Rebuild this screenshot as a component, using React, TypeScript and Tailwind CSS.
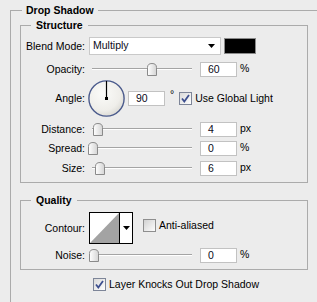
import React from "react";

const FONT = { fontFamily: '"Liberation Sans", Arial, sans-serif' };

function Thumb() {
    return (
        <svg width="10" height="13" viewBox="0 0 10 13" className="block">
            <defs>
                <linearGradient id="tg" x1="0" y1="0" x2="1" y2="0">
                    <stop offset="0" stopColor="#ffffff" />
                    <stop offset="1" stopColor="#d4d4d4" />
                </linearGradient>
            </defs>
            <path d="M0.5 4.5 Q0.5 0.5 5 0.5 Q9.5 0.5 9.5 4.5 V12.5 H0.5 Z" fill="url(#tg)" stroke="#8a8a8a" />
        </svg>
    );
}

function Slider({ left }: { left: number }) {
    return (
        <div className="relative w-[108px] h-[15px] shrink-0">
            <div className="absolute left-[4px] right-[4px] top-[6px] h-[2px] border-t border-[#a4a4a4] border-b border-b-white" />
            <div className="absolute top-[1px]" style={{ left }}>
                <Thumb />
            </div>
        </div>
    );
}

function Field({ value }: { value: string }) {
    return (
        <div className="w-[37px] h-[15px] shrink-0 bg-white border border-[#c2c2c2] flex items-center pl-[7px] text-[10.5px] text-[#0b0b20] leading-none">
            {value}
        </div>
    );
}

function Check({ checked }: { checked: boolean }) {
    return (
        <svg width="13" height="13" viewBox="0 0 13 13" className="block shrink-0">
            <defs>
                <linearGradient id={checked ? "cg1" : "cg0"} x1="0" y1="0" x2="1" y2="1">
                    <stop offset="0" stopColor={checked ? "#d8d8d8" : "#cfcfcf"} />
                    <stop offset="1" stopColor="#ffffff" />
                </linearGradient>
            </defs>
            <rect x="0.5" y="0.5" width="12" height="12" fill={`url(#${checked ? "cg1" : "cg0"})`} stroke={checked ? "#7d8598" : "#8e8e8e"} />
            {checked && <path d="M3 6.5 L5.3 9.5 L10 3" fill="none" stroke="#3d4f8f" strokeWidth="1.8" />}
        </svg>
    );
}

function Label({ children, w = 64 }: { children: React.ReactNode; w?: number }) {
    return (
        <div className="shrink-0 text-right text-[10.5px] text-black leading-none" style={{ width: w }}>
            {children}
        </div>
    );
}

function Group({ title, className, children }: { title: string; className: string; children: React.ReactNode }) {
    return (
        <div className={`relative border border-[#ababab] ${className}`}>
            <div className="absolute left-[10px] -top-[7px] px-[5px] bg-[#ececec] text-[10.5px] font-bold text-black leading-[13px]">
                {title}
            </div>
            {children}
        </div>
    );
}

export default function App() {
    return (
        <div className="w-[317px] h-[302px] overflow-hidden bg-[#ececec] pt-[10px] pl-[10px]" style={FONT}>
            <div className="relative w-[400px] h-[400px] border-t border-l border-[#ababab] pl-[9px]">
                <div className="absolute left-[11px] -top-[7px] px-[4px] bg-[#ececec] text-[10.5px] font-bold text-black leading-[13px]">
                    Drop Shadow
                </div>

                {/* Structure */}
                <Group title="Structure" className="mt-[14px] w-[288px] h-[158px]">
                    {/* Blend mode */}
                    <div className="flex items-center mt-[11px] h-[18px]">
                        <Label>Blend Mode:</Label>
                        <div className="ml-[4px] w-[132px] h-[18px] bg-white border border-[#c9c9c9] flex items-center justify-between pl-[3px] pr-[5px] text-[10.5px] text-[#0b0b20]">
                            <span>Multiply</span>
                            <svg width="7" height="4" viewBox="0 0 7 4"><path d="M0 0 H7 L3.5 4 Z" fill="#000" /></svg>
                        </div>
                        <div className="ml-[3px] w-[32px] h-[16px] bg-black border border-[#8a8a8a]" />
                    </div>

                    {/* Opacity */}
                    <div className="flex items-center mt-[7px] h-[15px]">
                        <Label>Opacity:</Label>
                        <div className="ml-[3px]"><Slider left={59} /></div>
                        <div className="ml-[4px]"><Field value="60" /></div>
                        <span className="ml-[3px] text-[10.5px] leading-none -mt-[3px]">%</span>
                    </div>

                    {/* Angle */}
                    <div className="flex items-center mt-[3px] h-[37px]">
                        <Label>Angle:</Label>
                        <svg width="37" height="37" viewBox="0 0 37 37" className="ml-[3px] shrink-0">
                            <defs>
                                <radialGradient id="dial" cx="0.4" cy="0.35" r="0.7">
                                    <stop offset="0" stopColor="#fbfbf9" />
                                    <stop offset="0.7" stopColor="#efeeea" />
                                    <stop offset="1" stopColor="#d9d8d2" />
                                </radialGradient>
                            </defs>
                            <circle cx="18.5" cy="18.5" r="17.6" fill="url(#dial)" stroke="#4a5a8c" strokeWidth="1.4" />
                            <line x1="18.5" y1="18.5" x2="18.5" y2="1" stroke="#000" strokeWidth="1.2" />
                            <rect x="17" y="17" width="3" height="3" fill="#000" />
                        </svg>
                        <div className="ml-[3px]"><Field value="90" /></div>
                        <span className="ml-[5px] text-[10.5px] leading-none self-start mt-[9px]">°</span>
                        <div className="ml-[5px]"><Check checked /></div>
                        <span className="ml-[3px] text-[10.5px] leading-none">Use Global Light</span>
                    </div>

                    {/* Distance */}
                    <div className="flex items-center mt-[5px] h-[15px]">
                        <Label>Distance:</Label>
                        <div className="ml-[3px]"><Slider left={5} /></div>
                        <div className="ml-[4px]"><Field value="4" /></div>
                        <span className="ml-[3px] text-[10.5px] leading-none -mt-[3px]">px</span>
                    </div>

                    {/* Spread */}
                    <div className="flex items-center mt-[4px] h-[15px]">
                        <Label>Spread:</Label>
                        <div className="ml-[3px]"><Slider left={0} /></div>
                        <div className="ml-[4px]"><Field value="0" /></div>
                        <span className="ml-[3px] text-[10.5px] leading-none -mt-[3px]">%</span>
                    </div>

                    {/* Size */}
                    <div className="flex items-center mt-[5px] h-[15px]">
                        <Label>Size:</Label>
                        <div className="ml-[3px]"><Slider left={7} /></div>
                        <div className="ml-[4px]"><Field value="6" /></div>
                        <span className="ml-[3px] text-[10.5px] leading-none -mt-[3px]">px</span>
                    </div>
                </Group>

                {/* Quality */}
                <Group title="Quality" className="mt-[17px] w-[288px] h-[70px]">
                    <div className="flex items-center mt-[11px] h-[32px]">
                        <Label>Contour:</Label>
                        <div className="ml-[4px] w-[44px] h-[32px] border border-black flex bg-white">
                            <svg width="29" height="30" viewBox="0 0 29 30" className="block">
                                <path d="M0 30 L29 0 V30 Z" fill="#a3a3a3" />
                            </svg>
                            <div className="w-px bg-black" />
                            <div className="flex-1 flex items-center justify-center">
                                <svg width="7" height="4" viewBox="0 0 7 4"><path d="M0 0 H7 L3.5 4 Z" fill="#000" /></svg>
                            </div>
                        </div>
                        <div className="ml-[10px] -mt-[5px]"><Check checked={false} /></div>
                        <span className="ml-[3px] -mt-[5px] text-[10.5px] leading-none">Anti-aliased</span>
                    </div>

                    <div className="flex items-center mt-[4px] h-[15px]">
                        <Label>Noise:</Label>
                        <div className="ml-[3px]"><Slider left={1} /></div>
                        <div className="ml-[4px]"><Field value="0" /></div>
                        <span className="ml-[3px] text-[10.5px] leading-none -mt-[3px]">%</span>
                    </div>
                </Group>

                <div className="flex items-center mt-[8px] ml-[73px] h-[13px]">
                    <Check checked />
                    <span className="ml-[3px] text-[10.5px] leading-none">Layer Knocks Out Drop Shadow</span>
                </div>
            </div>
        </div>
    );
}
